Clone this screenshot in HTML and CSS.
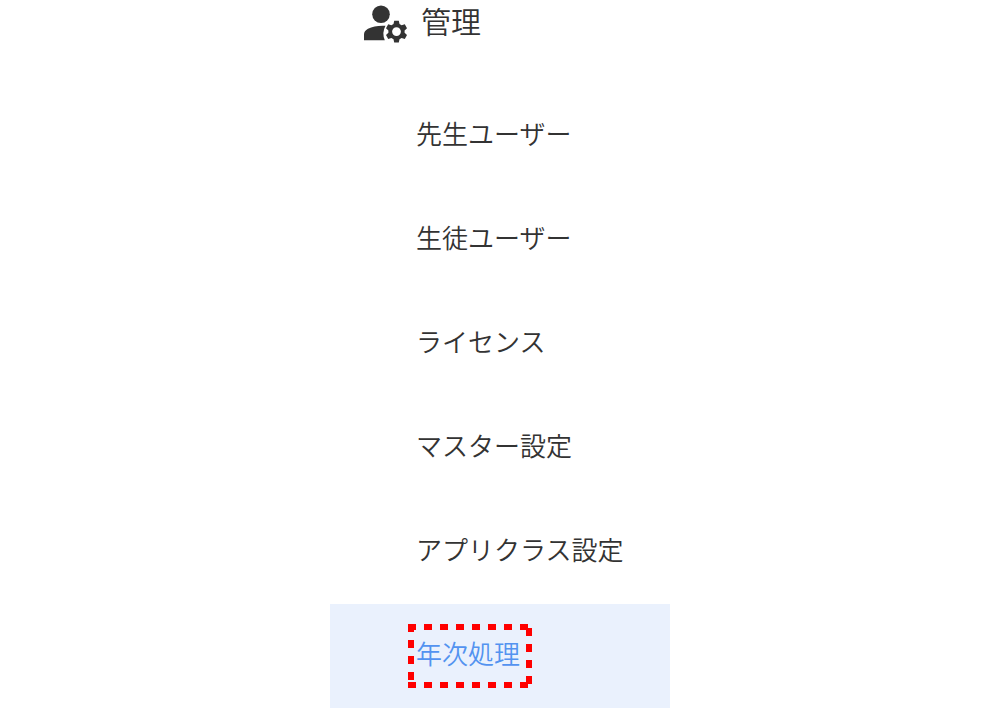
FILE: index.html
```html
<!DOCTYPE html>
<html lang="ja">
<head>
<meta charset="utf-8">
<meta name="viewport" content="width=device-width, initial-scale=1">
<title>管理</title>
<link rel="stylesheet" href="styles.css">
</head>
<body>
<nav class="menu" aria-labelledby="menu-title">
  <header class="menu-header">
    <svg class="menu-icon" viewBox="0 0 43 38" aria-hidden="true">
      <circle cx="17" cy="9.200" r="8.800"/>
      <path d="M0 35.300V29.500Q0 26 4 23.800Q11 20.200 21.500 20.800Q17.600 28 20.800 35.300Z"/>
      <path fill-rule="evenodd" d="M30.200 15.800h4.600l.7 3.200 2.100 1.200 3.200-1 2.200 4-2.400 2.200v2.400l2.400 2.200-2.200 4-3.200-1-2.100 1.200-.7 3.200h-4.600l-.7-3.200-2.100-1.200-3.200 1-2.200-4 2.400-2.200v-2.400L22 23.200l2.200-4 3.200 1 2.100-1.200zM32.500 22.200a4.400 4.400 0 1 0 0 8.800a4.400 4.400 0 1 0 0-8.800z"/>
    </svg>
    <h1 class="menu-title" id="menu-title">管理</h1>
  </header>
  <ul class="menu-list">
    <li><a class="menu-link" href="#teachers">先生ユーザー</a></li>
    <li><a class="menu-link" href="#students">生徒ユーザー</a></li>
    <li><a class="menu-link" href="#licenses">ライセンス</a></li>
    <li><a class="menu-link" href="#master">マスター設定</a></li>
    <li><a class="menu-link" href="#app-class">アプリクラス設定</a></li>
    <li><a class="menu-link menu-link-active" href="#annual" aria-current="page"><span class="marked">年次処理<svg class="marker" viewBox="0 0 124 64" aria-hidden="true"><path d="M0 3H121M121 4V61M0 61H121M3 0V61"/></svg></span></a></li>
  </ul>
</nav>
</body>
</html>
```
FILE: styles.css
```css
body {
  margin: 0;
  background: #fff;
  color: #333;
  font-family: "Noto Sans CJK JP", sans-serif;
  font-weight: 350;
}

.menu {
  max-width: 340px;
  margin: 0 auto;
}

.menu-header {
  display: flex;
  align-items: flex-start;
  gap: 14px;
  padding: 5px 34px 41px;
}

.menu-icon {
  width: 43px;
  height: 38px;
  flex: none;
  fill: #333;
}

.menu-title {
  margin: 0;
  font-size: 30px;
  font-weight: 350;
  line-height: 30px;
}

.menu-list {
  margin: 0;
  padding: 0;
  list-style: none;
}

.menu-link {
  display: block;
  padding: 29px 0 35px 86px;
  font-size: 26px;
  line-height: 40px;
  color: inherit;
  text-decoration: none;
  white-space: nowrap;
}

.menu-link-active {
  background: #eaf1fd;
  color: #5393f0;
}

.marked {
  position: relative;
  display: inline-block;
}

.marker {
  position: absolute;
  top: -9px;
  left: -8px;
  width: 124px;
  height: 64px;
  fill: none;
  stroke: #f00;
  stroke-width: 6;
  stroke-dasharray: 8 8;
}
```
